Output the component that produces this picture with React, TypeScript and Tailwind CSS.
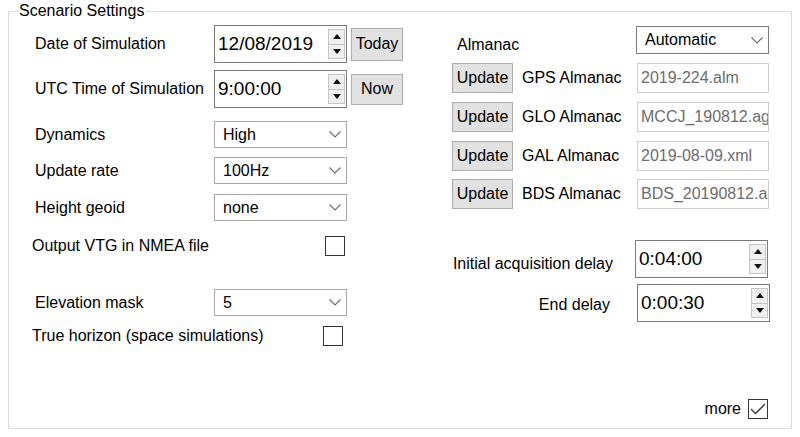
import React from 'react';

const font = { fontFamily: '"Liberation Sans", Arial, sans-serif' };

const Spinner: React.FC = () => (
  <div className="flex flex-col w-[17px] h-full ml-auto">
    <div className="flex-1 flex items-center justify-center bg-[#f0f0f0] border border-[#c4c4c4]">
      <svg width="8" height="5" viewBox="0 0 8 5"><path d="M0 5 L4 0 L8 5 Z" fill="#111" /></svg>
    </div>
    <div className="flex-1 flex items-center justify-center bg-[#f0f0f0] border border-t-0 border-[#c4c4c4]">
      <svg width="8" height="5" viewBox="0 0 8 5"><path d="M0 0 L4 5 L8 0 Z" fill="#111" /></svg>
    </div>
  </div>
);

const SpinBox: React.FC<{ value: string; className?: string }> = ({ value, className = '' }) => (
  <div className={`flex items-stretch w-[133px] h-[38px] border border-[#7a7a7a] bg-white pl-[3px] pr-[1px] py-[3px] ${className}`}>
    <span className="text-[19px] leading-none self-center pb-[2px]">{value}</span>
    <Spinner />
  </div>
);

const Chevron: React.FC = () => (
  <svg width="12" height="7" viewBox="0 0 12 7" className="ml-auto">
    <path d="M0.5 0.5 L6 6 L11.5 0.5" fill="none" stroke="#707070" strokeWidth="1.2" />
  </svg>
);

const Select: React.FC<{ value: string; dark?: boolean; h?: string }> = ({ value, dark, h = 'h-[27px]' }) => (
  <div className={`flex items-center w-[133px] ${h} border ${dark ? 'border-[#7a7a7a]' : 'border-[#a9a9a9]'} bg-white pl-[8px] pr-[5px]`}>
    <span className="text-[16px] leading-none">{value}</span>
    <Chevron />
  </div>
);

const Button: React.FC<{ label: string; className?: string }> = ({ label, className = '' }) => (
  <div className={`flex items-center justify-center bg-[#e1e1e1] border border-[#adadad] text-[16px] leading-none ${className}`}>
    {label}
  </div>
);

const CheckBox: React.FC<{ checked?: boolean }> = ({ checked }) => (
  <div className="w-[20px] h-[20px] border border-[#333] bg-white flex items-center justify-center">
    {checked && (
      <svg width="16" height="12" viewBox="0 0 16 12">
        <path d="M1 6 L5.5 10.5 L15 1" fill="none" stroke="#333" strokeWidth="1.3" />
      </svg>
    )}
  </div>
);

const SelectRow: React.FC<{ label: string; value: string; className?: string }> = ({ label, value, className = '' }) => (
  <div className={`flex items-center ${className}`}>
    <span className="w-[182px] pl-[3px] text-[16px]">{label}</span>
    <Select value={value} />
  </div>
);

const almanacs = [
  { name: 'GPS Almanac', file: '2019-224.alm', mt: 'mt-[6px]' },
  { name: 'GLO Almanac', file: 'MCCJ_190812.agl', mt: 'mt-[9px]' },
  { name: 'GAL Almanac', file: '2019-08-09.xml', mt: 'mt-[9px]' },
  { name: 'BDS Almanac', file: 'BDS_20190812.alm', mt: 'mt-[8px]' },
];

export default function App() {
  return (
    <div className="w-[800px] h-[437px] bg-white text-black pt-[11px] pl-[8px]" style={font}>
      <div className="relative w-[784px] h-[418px] border border-[#dcdcdc] flex">
        <span className="absolute -top-[10px] left-[8px] bg-white px-[2px] text-[16px] leading-[18px]">Scenario Settings</span>

        {/* left column */}
        <div className="ml-[23px] w-[371px] flex flex-col pt-[13px]">
          <div className="flex items-center">
            <span className="w-[182px] pl-[3px] text-[16px]">Date of Simulation</span>
            <SpinBox value="12/08/2019" />
            <Button label="Today" className="ml-[4px] w-[52px] h-[33px]" />
          </div>
          <div className="flex items-center mt-[7px]">
            <span className="w-[182px] pl-[3px] text-[16px]">UTC Time of Simulation</span>
            <SpinBox value="9:00:00" className="h-[37px]" />
            <Button label="Now" className="ml-[4px] w-[52px] h-[31px]" />
          </div>
          <SelectRow label="Dynamics" value="High" className="mt-[13px]" />
          <SelectRow label="Update rate" value="100Hz" className="mt-[9px]" />
          <SelectRow label="Height geoid" value="none" className="mt-[10px]" />
          <div className="flex items-center mt-[13px]">
            <span className="w-[293px] text-[16px]">Output VTG in NMEA file</span>
            <CheckBox />
          </div>
          <SelectRow label="Elevation mask" value="5" className="mt-[31px]" />
          <div className="flex items-center mt-[8px]">
            <span className="w-[291px] text-[16px]">True horizon (space simulations)</span>
            <CheckBox />
          </div>
        </div>

        {/* right column */}
        <div className="ml-[49px] w-[318px] flex flex-col pt-[11px]">
          <div className="flex items-center">
            <span className="w-[184px] pl-[5px] text-[16px] mt-[10px]">Almanac</span>
            <Select value="Automatic" dark h="h-[28px]" />
          </div>
          {almanacs.map(a => (
            <div key={a.name} className={`flex items-center ${a.mt}`}>
              <Button label="Update" className="w-[61px] h-[30px]" />
              <span className="ml-[9px] w-[115px] text-[16px]">{a.name}</span>
              <div className="w-[132px] h-[30px] border border-[#cccccc] bg-white pl-[3px] flex items-center overflow-hidden whitespace-nowrap">
                <span className="text-[16px] leading-none text-[#6d6d6d]">{a.file}</span>
              </div>
            </div>
          ))}
          <div className="flex items-center justify-end mt-[31px] pr-[2px]">
            <span className="text-[16px] mt-[10px]">Initial acquisition delay</span>
            <SpinBox value="0:04:00" className="ml-[22px]" />
          </div>
          <div className="flex items-center justify-end mt-[6px]">
            <span className="text-[16px] mt-[4px]">End delay</span>
            <SpinBox value="0:00:30" className="ml-[27px]" />
          </div>
          <div className="flex items-center justify-end mt-[75px] pr-[2px]">
            <span className="text-[16px] mr-[7px]">more</span>
            <CheckBox checked />
          </div>
        </div>
      </div>
    </div>
  );
}
